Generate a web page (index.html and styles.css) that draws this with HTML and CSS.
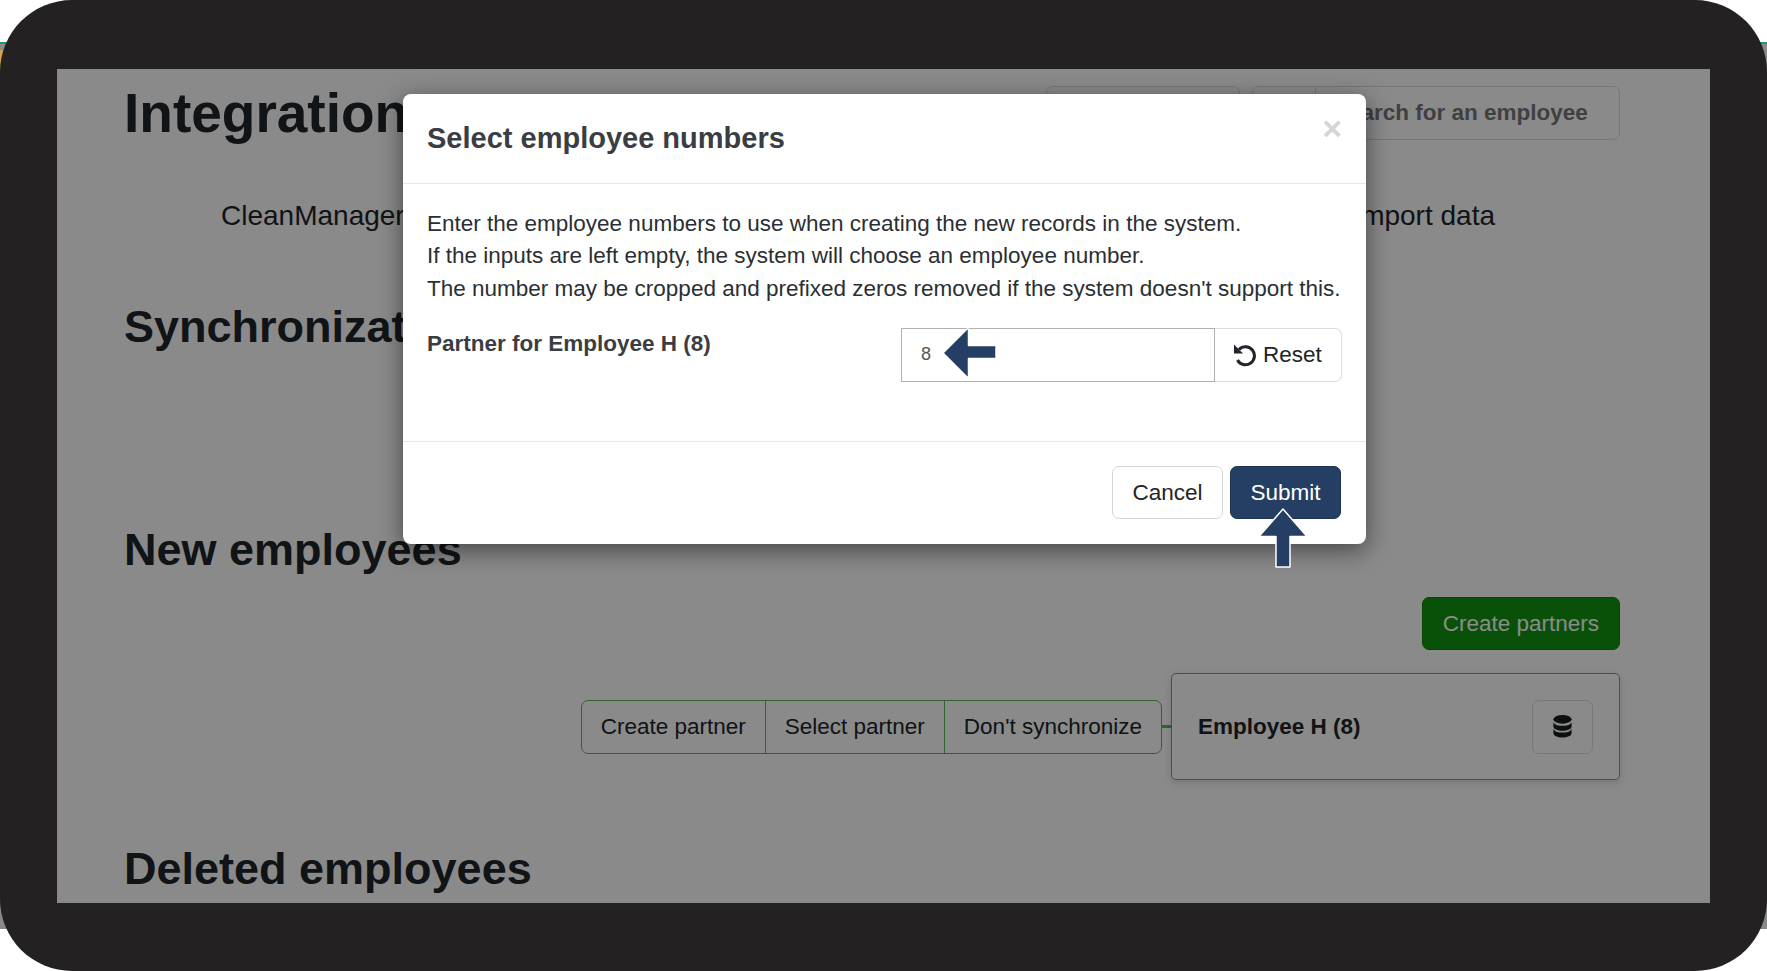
FILE: index.html
```html
<!DOCTYPE html>
<html lang="en">
<head>
    <meta charset="UTF-8">
    <title>Integration</title>
    <link rel="stylesheet" href="styles.css">
</head>
<body>

<div class="frame">
    <div class="screen">
        <!-- page behind the modal -->
        <div class="page">
            <div class="title-row">
                <h1>Integration</h1>
                <div class="top-tools">
                    <button class="tool-btn tool-first">&nbsp;</button>
                    <div class="search-group">
                        <span class="search-addon"></span>
                        <span class="search-text">Search for an employee</span>
                    </div>
                </div>
            </div>

            <div class="tabs">
                <span>CleanManager</span>
                <span>Import data</span>
            </div>

            <h2 class="sync-title">Synchronization</h2>
            <h2 class="new-title">New employees</h2>

            <div class="create-row">
                <button class="create-btn">Create partners</button>
            </div>

            <div class="employee-row">
                <div class="action-group">
                    <span>Create partner</span>
                    <span>Select partner</span>
                    <span>Don't synchronize</span>
                </div>
                <div class="connector"></div>
                <div class="employee-card">
                    <strong>Employee H (8)</strong>
                    <span class="db-btn">
                        <svg width="21" height="23" viewBox="0 0 20 24">
                            <ellipse cx="10" cy="4.5" rx="9.5" ry="4.5" fill="#1b1e1f"/>
                            <path d="M.5 7.5C2 10.5 6 11.3 10 11.3s8-.8 9.500-3.800V12c0 2.500-4.300 4.500-9.500 4.500S.5 14.500.5 12z" fill="#1b1e1f"/>
                            <path d="M.5 14.500C2 17.500 6 18.300 10 18.300s8-.8 9.500-3.800V19c0 2.500-4.300 4.500-9.500 4.500S.5 21.500.5 19z" fill="#1b1e1f"/>
                        </svg>
                    </span>
                </div>
            </div>

            <h2 class="deleted-title">Deleted employees</h2>
        </div>

        <div class="backdrop"></div>

        <!-- modal -->
        <div class="modal">
            <div class="modal-header">
                <h3>Select employee numbers</h3>
                <span class="close">&times;</span>
            </div>
            <div class="modal-body">
                <p>Enter the employee numbers to use when creating the new records in the system.<br>
                If the inputs are left empty, the system will choose an employee number.<br>
                The number may be cropped and prefixed zeros removed if the system doesn't support this.</p>
                <div class="form-row">
                    <label>Partner for Employee H (8)</label>
                    <div class="input-group">
                        <input type="text" value="8">
                        <button class="reset-btn">
                            <svg width="24" height="24" viewBox="0 0 24 24" fill="none" stroke="#212529" stroke-width="3">
                                <path d="M6 6.500A9 9 0 1 1 4.500 17"/>
                                <path d="M1 1.500v9h9z" fill="#212529" stroke="none"/>
                            </svg>
                            Reset
                        </button>
                    </div>
                </div>
            </div>
            <div class="modal-footer">
                <button class="cancel-btn">Cancel</button>
                <button class="submit-btn">Submit</button>
            </div>
        </div>
    </div>
</div>

<!-- tutorial arrows on top of the modal -->
<svg class="arrow arrow-left" width="58" height="52" viewBox="0 0 58 52">
    <path d="M2 26L26 2h1.500v16.500H55v13H27.500V50H26z" fill="#243f63" stroke="#fff" stroke-width="1.500" stroke-linejoin="round"/>
</svg>
<svg class="arrow arrow-up" width="52" height="62" viewBox="0 0 52 62">
    <path d="M26 2L50 29.500H33V60H19V29.500H2z" fill="#243f63" stroke="#fff" stroke-width="1.500" stroke-linejoin="round"/>
</svg>

</body>
</html>
```

FILE: styles.css
```css
* {
    box-sizing: border-box;
}

html, body {
    height: 100%;
}

body {
    margin: 0;
    overflow: hidden;
    font-family: "Liberation Sans", Arial, sans-serif;
    color: #212529;
    background:
        linear-gradient(#d9a050, #d9a050) 0 50px / 4px 20px no-repeat,
        linear-gradient(#fff 42px, #1a9a7a 42px, #1a9a7a 44px, #8a8a8a 44px, #8a8a8a 929px, #fff 929px);
}

.frame {
    height: 971px;
    padding: 69px 57px 68px 57px;
    background: #232122;
    border-radius: 72px;
}

.screen {
    position: relative;
    height: 100%;
    overflow: hidden;
    background: #fff;
}

.backdrop {
    position: absolute;
    inset: 0;
    background: rgba(0, 0, 0, 0.46);
}

/* page behind the modal */
.page {
    padding: 0 90px 0 67px;
}

.title-row {
    display: flex;
    justify-content: space-between;
    padding-top: 17px;
    height: 72px;
}

h1 {
    margin: 0;
    font-size: 55px;
    line-height: 54px;
}

h2 {
    margin: 0;
    font-size: 45px;
    line-height: 54px;
}

.top-tools {
    display: flex;
    gap: 12px;
}

.tool-btn {
    width: 194px;
    height: 54px;
    background: #fff;
    border: 1px solid #ddd;
    border-radius: 7px;
}

.search-group {
    display: flex;
    width: 368px;
    height: 54px;
    border: 1px solid #ddd;
    border-radius: 7px;
}

.search-addon {
    width: 63px;
    border-right: 1px solid #ddd;
}

.search-text {
    flex: 1;
    padding-left: 18px;
    font-size: 22.500px;
    font-weight: bold;
    line-height: 52px;
    color: #777;
}

.tabs {
    display: flex;
    justify-content: space-between;
    margin-top: 58px;
    padding: 0 0 0 97px;
    font-size: 28px;
    line-height: 34px;
}

.tabs span:last-child {
    margin-right: 125px;
}

.sync-title {
    margin-top: 67px;
}

.new-title {
    margin-top: 169px;
}

.create-row {
    display: flex;
    justify-content: flex-end;
    margin-top: 20px;
}

.create-btn {
    height: 53px;
    padding: 0 20px;
    background: #129512;
    border: 1px solid #0f800f;
    border-radius: 7px;
    color: #fff;
    font: 22.500px "Liberation Sans", Arial, sans-serif;
}

.employee-row {
    display: flex;
    align-items: center;
    justify-content: flex-end;
    margin-top: 23px;
}

.action-group {
    display: flex;
    height: 54px;
    border: 1px solid #5cb85c;
    border-radius: 7px;
    font-size: 22.500px;
    line-height: 52px;
}

.action-group span {
    padding: 0 19px;
    border-left: 1px solid #5cb85c;
}

.action-group span:first-child {
    border-left: none;
}

.connector {
    width: 9px;
    height: 3px;
    background: #58b858;
}

.employee-card {
    display: flex;
    align-items: center;
    justify-content: space-between;
    width: 449px;
    height: 107px;
    padding: 0 26px;
    border: 1px solid #5cb85c;
    border-radius: 5px;
    font-size: 22.500px;
    box-shadow: 0 3px 8px rgba(0, 0, 0, 0.15);
}

.db-btn {
    display: flex;
    align-items: center;
    justify-content: center;
    width: 61px;
    height: 54px;
    border: 1px solid #ddd;
    border-radius: 7px;
}

.deleted-title {
    margin-top: 62px;
}

/* modal */
.modal {
    position: absolute;
    left: 346px;
    top: 25px;
    width: 963px;
    height: 450px;
    display: flex;
    flex-direction: column;
    background: #fff;
    border-radius: 8px;
    box-shadow: 0 6px 24px rgba(0, 0, 0, 0.5);
}

.modal-header {
    display: flex;
    justify-content: space-between;
    height: 90px;
    padding: 27px 24px;
    border-bottom: 1px solid #e5e5e5;
}

.modal-header h3 {
    margin: 0;
    font-size: 29px;
    line-height: 34px;
    color: #3a3e42;
}

.close {
    margin-top: -9px;
    font-size: 34px;
    line-height: 32px;
    font-weight: bold;
    color: #d5d5d5;
}

.modal-body {
    flex: 1;
    padding: 24px 24px 0;
    font-size: 22.500px;
    color: #2b2f33;
}

.modal-body p {
    margin: 0;
    line-height: 32.300px;
}

.form-row {
    display: flex;
    justify-content: space-between;
    margin-top: 23px;
}

.form-row label {
    font-weight: bold;
    line-height: 32px;
    color: #3a3e42;
}

.input-group {
    display: flex;
}

.input-group input {
    width: 314px;
    height: 54px;
    padding: 0 19px;
    border: 1px solid #b0b0b0;
    font: 18px "Liberation Sans", Arial, sans-serif;
    color: #555;
}

.reset-btn {
    display: flex;
    align-items: center;
    gap: 6px;
    width: 127px;
    height: 54px;
    padding: 0 0 0 18px;
    background: #fff;
    border: 1px solid #ddd;
    border-left: none;
    border-radius: 0 7px 7px 0;
    color: #212529;
    font: 22.500px "Liberation Sans", Arial, sans-serif;
}

.modal-footer {
    display: flex;
    justify-content: flex-end;
    gap: 7px;
    height: 103px;
    padding: 24px 25px;
    border-top: 1px solid #e5e5e5;
}

.cancel-btn, .submit-btn {
    width: 111px;
    height: 53px;
    border-radius: 7px;
    font: 22.500px "Liberation Sans", Arial, sans-serif;
}

.cancel-btn {
    background: #fff;
    border: 1px solid #d5d5d5;
    color: #212529;
}

.submit-btn {
    background: #243f63;
    border: 1px solid #1d3552;
    color: #fff;
}

/* tutorial arrows */
.arrow {
    position: absolute;
}

.arrow-left {
    left: 941px;
    top: 327px;
}

.arrow-up {
    left: 1257px;
    top: 507px;
}
```
